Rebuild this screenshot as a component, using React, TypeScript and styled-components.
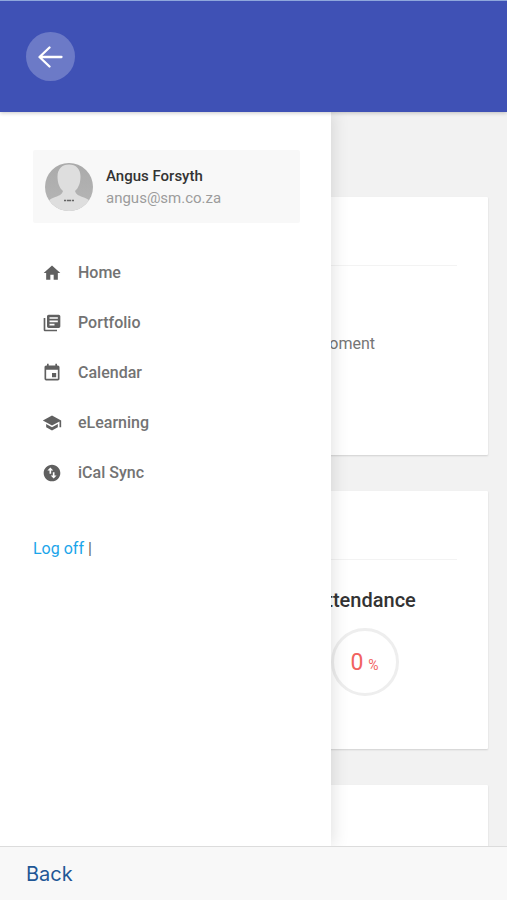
import React from "react";
import styled, { createGlobalStyle } from "styled-components";
import { MdHome, MdLibraryBooks, MdEvent, MdSchool, MdSwapVerticalCircle } from "react-icons/md";

const GlobalStyle = createGlobalStyle`
  *, *::before, *::after { box-sizing: border-box; }
  body { margin: 0; background: #f2f2f2; font-family: Roboto, sans-serif; }
  p, h2, ul { margin: 0; padding: 0; }
`;

const Page = styled.div`
  height: 100vh;
  display: grid;
  grid-template-rows: auto minmax(0, 1fr) auto;
`;

const Header = styled.header`
  z-index: 3;
  display: flex;
  align-items: center;
  padding: 31px 26px;
  background: #3f51b5;
  border-top: 1px solid #8ea7dc;
  box-shadow: 0 1px 4px rgba(0, 0, 0, 0.22);
`;

const BackButton = styled.button`
  display: grid;
  place-items: center;
  width: 49px;
  height: 49px;
  padding: 0;
  border: 0;
  border-radius: 50%;
  background: #6c7ac7;
  color: #fff;
`;

const Main = styled.main`
  position: relative;
  overflow: hidden;
`;

const Cards = styled.div`
  display: flex;
  flex-direction: column;
  gap: 36px;
  padding: 85px 19px 0;
`;

const Card = styled.section`
  flex: none;
  height: 258px;
  padding: 0 31px 0 32px;
  background: #fff;
  border-radius: 1px;
  box-shadow: 0 1px 2px rgba(0, 0, 0, 0.14);
`;

const CardHead = styled.div`
  height: 69px;
  border-bottom: 1px solid #f3f3f3;
`;

const Notice = styled.p`
  padding: 68px 82px 0 0;
  text-align: right;
  font-size: 16px;
  line-height: 20px;
  color: #757575;
`;

const Stats = styled.div`
  display: grid;
  grid-template-columns: 1fr 1fr;
  column-gap: 36px;
  padding-top: 28px;
`;

const Stat = styled.div`
  grid-column: 2;
  display: flex;
  flex-direction: column;
  align-items: center;
  gap: 16px;
`;

const StatTitle = styled.h2`
  font-size: 20px;
  line-height: 24px;
  font-weight: 500;
  color: #333;
`;

const Ring = styled.div`
  display: flex;
  align-items: baseline;
  justify-content: center;
  gap: 5px;
  width: 68px;
  height: 68px;
  border: 3px solid #eee;
  border-radius: 50%;
  font-size: 23px;
  line-height: 64px;
  color: #f1635f;
`;

const Unit = styled.span`
  font-size: 14px;
`;

const Drawer = styled.aside`
  position: absolute;
  inset: 0 auto 0 0;
  width: min(331px, 90vw);
  padding: 38px 31px 0 33px;
  background: #fff;
  box-shadow: 2px 0 16px rgba(0, 0, 0, 0.12);
`;

const Profile = styled.div`
  display: flex;
  align-items: center;
  gap: 13px;
  height: 73px;
  padding: 0 12px;
  border-radius: 2px;
  background: #f8f8f8;
`;

const UserText = styled.div`
  display: flex;
  flex-direction: column;
  font-size: 15px;
  line-height: 22px;
`;

const UserName = styled.strong`
  font-weight: 500;
  color: #333;
`;

const Email = styled.span`
  color: #9c9c9c;
`;

const Menu = styled.ul`
  display: flex;
  flex-direction: column;
  gap: 26px;
  padding: 38px 9px 0;
  list-style: none;
`;

const MenuLink = styled.a`
  display: flex;
  align-items: center;
  gap: 16px;
  font-size: 16px;
  line-height: 24px;
  font-weight: 500;
  color: #737373;
  text-decoration: none;

  svg {
    font-size: 20px;
    color: #606060;
  }
`;

const Account = styled.p`
  padding-top: 52px;
  font-size: 16px;
  line-height: 24px;
  color: #666;
`;

const LogOff = styled.a`
  color: #1ba5ea;
  text-decoration: none;
`;

const Footer = styled.footer`
  z-index: 3;
  padding: 13px 26px 12px;
  background: #f8f8f8;
  border-top: 1px solid #dcdcdc;
`;

const FooterButton = styled.button`
  display: block;
  padding: 0;
  border: 0;
  background: none;
  font-family: Inter, sans-serif;
  font-size: 20px;
  line-height: 28px;
  color: #1f5796;
`;

const menuItems = [
  { label: "Home", Icon: MdHome },
  { label: "Portfolio", Icon: MdLibraryBooks },
  { label: "Calendar", Icon: MdEvent },
  { label: "eLearning", Icon: MdSchool },
  { label: "iCal Sync", Icon: MdSwapVerticalCircle },
];

function ArrowIcon() {
  return (
    <svg width="26" height="24" viewBox="0 0 26 24" fill="none" stroke="currentColor" strokeWidth="2.300" strokeLinecap="round" strokeLinejoin="round" aria-hidden="true">
      <path d="M23.500 12H1.800M11.500 2.500L1.500 12l10 9.500" />
    </svg>
  );
}

function Avatar() {
  return (
    <svg width="48" height="48" viewBox="0 0 48 48" aria-hidden="true">
      <defs>
        <clipPath id="avatar-circle"><circle cx="24" cy="24" r="24" /></clipPath>
        <linearGradient id="avatar-back" x1="0" y1="0" x2="0" y2="1">
          <stop offset="0" stopColor="#aaa" />
          <stop offset="1" stopColor="#b6b6b6" />
        </linearGradient>
      </defs>
      <g clipPath="url(#avatar-circle)">
        <rect width="48" height="48" fill="url(#avatar-back)" />
        <path d="M24 1.500c-7 0-11.500 4.500-11.500 12 0 6.500 2 11.500 5.500 14.500-1 4-5 5-9 6.500-4 1.500-7 4-9 7V48h48v-7c-2-3-5-5-9-6.500-4-1.500-8-2.500-9-6.500 3.500-3 5.500-8 5.500-14.500 0-7.500-4.500-12-11.500-12z" fill="#dedede" />
        <path d="M19 37.500h2m.8 0h4.400m.8 0h2" stroke="#666" strokeWidth="1.500" />
      </g>
    </svg>
  );
}

export default function App() {
  return (
    <>
      <GlobalStyle />
      <Page>
        <Header>
          <BackButton type="button" aria-label="Close menu"><ArrowIcon /></BackButton>
        </Header>
        <Main>
          <Cards>
            <Card>
              <CardHead />
              <Notice>moment</Notice>
            </Card>
            <Card>
              <CardHead />
              <Stats>
                <Stat>
                  <StatTitle>Attendance</StatTitle>
                  <Ring>0<Unit>%</Unit></Ring>
                </Stat>
              </Stats>
            </Card>
            <Card />
          </Cards>
          <Drawer>
            <Profile>
              <Avatar />
              <UserText>
                <UserName>Angus Forsyth</UserName>
                <Email>angus@sm.co.za</Email>
              </UserText>
            </Profile>
            <nav>
              <Menu>
                {menuItems.map(({ label, Icon }) => (
                  <li key={label}>
                    <MenuLink href="#"><Icon aria-hidden="true" />{label}</MenuLink>
                  </li>
                ))}
              </Menu>
            </nav>
            <Account><LogOff href="#">Log off</LogOff> |</Account>
          </Drawer>
        </Main>
        <Footer>
          <FooterButton type="button">Back</FooterButton>
        </Footer>
      </Page>
    </>
  );
}
